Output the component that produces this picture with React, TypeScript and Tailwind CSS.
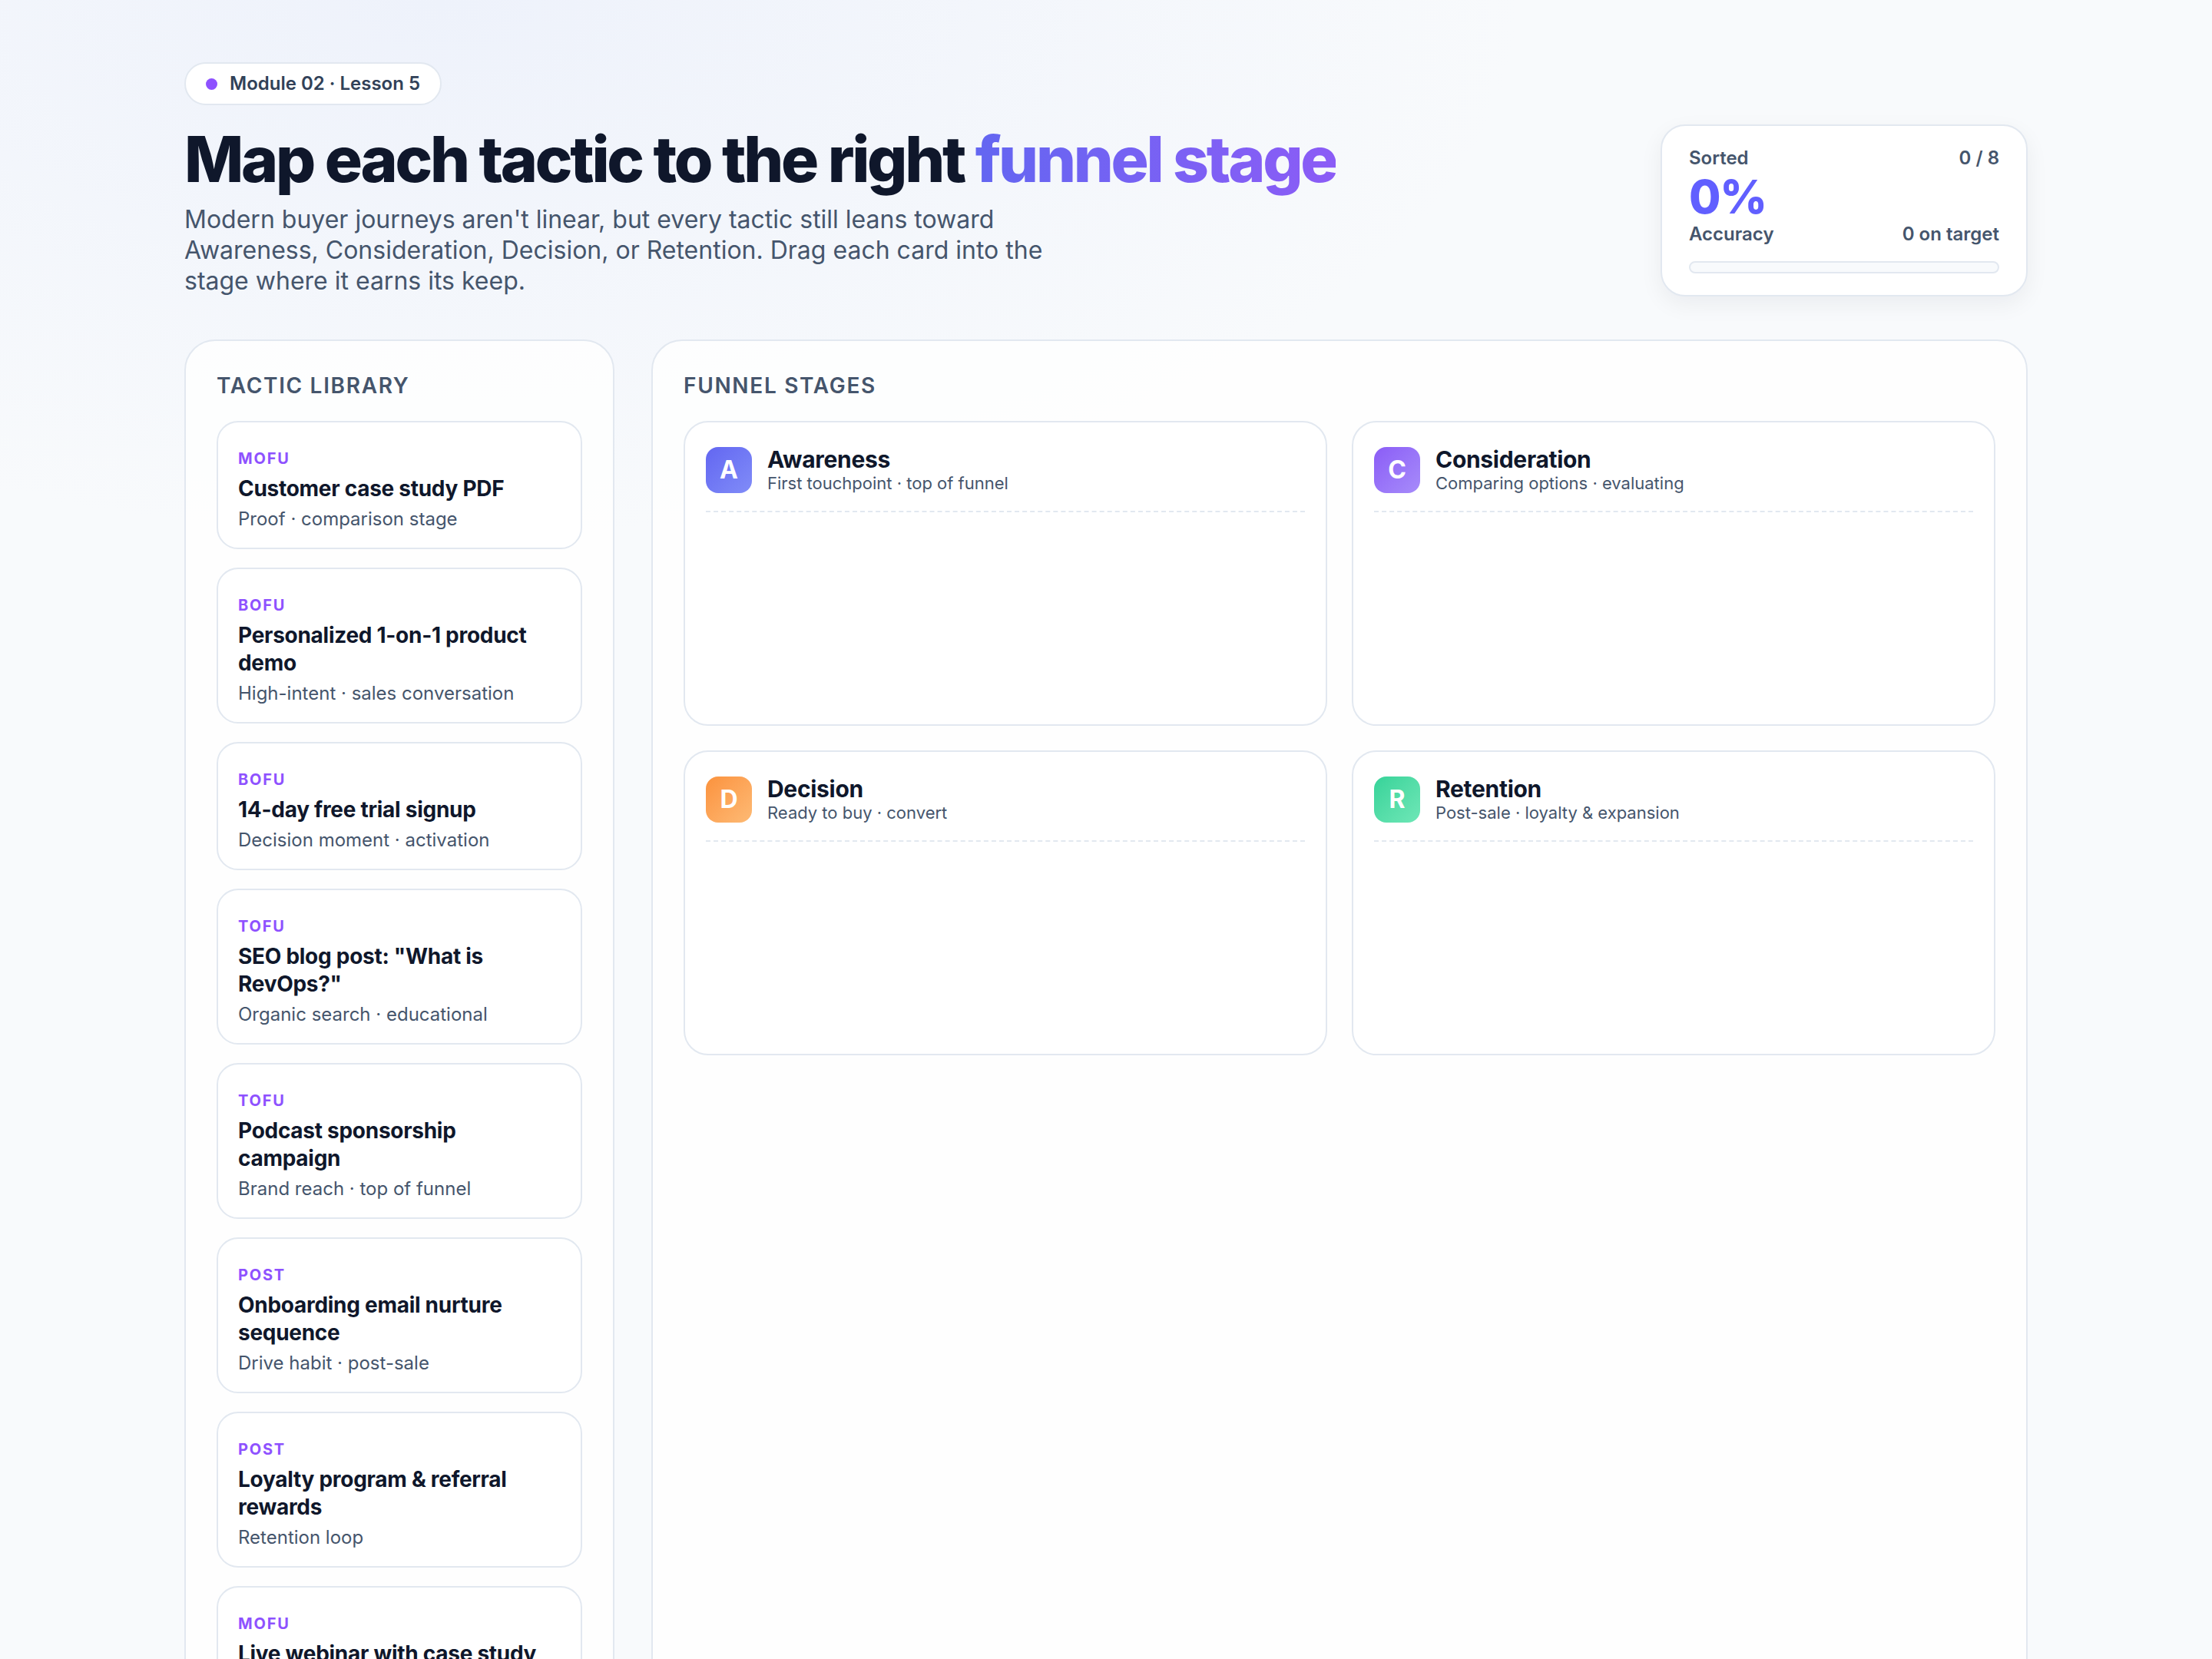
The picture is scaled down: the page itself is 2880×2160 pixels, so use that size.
import React from 'react'

type Tactic = { tag: string; title: string; note: string }
type Stage = { letter: string; name: string; hint: string; tile: string }

const tactics: Tactic[] = [
  { tag: 'MOFU', title: 'Customer case study PDF', note: 'Proof · comparison stage' },
  { tag: 'BOFU', title: 'Personalized 1-on-1 product demo', note: 'High-intent · sales conversation' },
  { tag: 'BOFU', title: '14-day free trial signup', note: 'Decision moment · activation' },
  { tag: 'TOFU', title: 'SEO blog post: "What is RevOps?"', note: 'Organic search · educational' },
  { tag: 'TOFU', title: 'Podcast sponsorship campaign', note: 'Brand reach · top of funnel' },
  { tag: 'POST', title: 'Onboarding email nurture sequence', note: 'Drive habit · post-sale' },
  { tag: 'POST', title: 'Loyalty program & referral rewards', note: 'Retention loop' },
  { tag: 'MOFU', title: 'Live webinar with case study', note: 'Evaluation · deep dive' },
]

const stages: Stage[] = [
  { letter: 'A', name: 'Awareness', hint: 'First touchpoint · top of funnel', tile: 'bg-gradient-to-br from-[#6366f1] to-[#818cf8]' },
  { letter: 'C', name: 'Consideration', hint: 'Comparing options · evaluating', tile: 'bg-gradient-to-br from-[#8b5cf6] to-[#a78bfa]' },
  { letter: 'D', name: 'Decision', hint: 'Ready to buy · convert', tile: 'bg-gradient-to-br from-[#fb923c] to-[#fdba74]' },
  { letter: 'R', name: 'Retention', hint: 'Post-sale · loyalty & expansion', tile: 'bg-gradient-to-br from-[#34d399] to-[#6ee7b7]' },
]

function StatsCard() {
  const sorted = 0
  const total = 8
  const accuracy = 0
  return (
    <div className="w-[478px] rounded-[32px] border-2 border-slate-200 bg-white px-[35px] pt-[26px] pb-[28px] shadow-[0_10px_30px_rgba(15,23,42,0.06)]">
      <div className="flex items-center justify-between text-[24px] leading-[32px] font-semibold text-slate-600">
        <span>Sorted</span>
        <span>{sorted} / {total}</span>
      </div>
      <div className="mt-[8px] text-[60px] leading-[52px] font-extrabold tracking-[-0.02em] text-indigo-500">
        {accuracy}%
      </div>
      <div className="mt-[11px] flex items-center justify-between text-[24px] leading-[24px] font-semibold text-slate-600">
        <span>Accuracy</span>
        <span>{sorted} on target</span>
      </div>
      <div className="mt-[23px] h-[16px] rounded-full border-2 border-slate-200 bg-slate-50">
        <div className="h-full rounded-full bg-indigo-500" style={{ width: `${(sorted / total) * 100}%` }} />
      </div>
    </div>
  )
}

function TacticCard({ t }: { t: Tactic }) {
  return (
    <div className="rounded-[28px] border-2 border-slate-200 bg-white px-[26px] pt-[33px] pb-[19px]">
      <div className="text-[20px] leading-[28px] font-bold tracking-[0.09em] text-violet-500">{t.tag}</div>
      <div className="mt-[7px] text-[28px] leading-[36px] font-bold tracking-[-0.01em] text-slate-900">{t.title}</div>
      <div className="mt-1 text-[24px] leading-[36px] text-slate-600">{t.note}</div>
    </div>
  )
}

function StageCard({ s }: { s: Stage }) {
  return (
    <div className="min-h-[397px] rounded-[32px] border-2 border-slate-200 bg-white px-[27px] pt-[31px]">
      <div className="flex items-center gap-5 border-b-2 border-dashed border-slate-200 pb-[22px]">
        <div className={`flex h-[60px] w-[60px] shrink-0 items-center justify-center rounded-[16px] text-[32px] font-bold text-white ${s.tile}`}>
          {s.letter}
        </div>
        <div>
          <div className="text-[30px] leading-[34px] font-bold tracking-[-0.01em] text-slate-900">{s.name}</div>
          <div className="text-[22px] leading-[28px] text-slate-600">{s.hint}</div>
        </div>
      </div>
    </div>
  )
}

export default function App() {
  return (
    <div className="min-h-screen bg-[#f8fafc] bg-[radial-gradient(ellipse_1400px_700px_at_20%_0%,#eef2fb_0%,#f8fafc_100%)] font-['Inter',sans-serif]">
      <div className="mx-auto w-[2400px] pt-[81px] pb-20">
        {/* Header */}
        <header className="flex items-end justify-between">
          <div>
            <div className="inline-flex items-center gap-4 rounded-full border-2 border-slate-200 bg-white px-[26px] py-[8px] text-[24px] leading-[36px] font-semibold text-slate-700">
              <span className="h-[15px] w-[15px] rounded-full bg-violet-500" />
              Module 02 · Lesson 5
            </div>
            <h1 className="mt-[27px] text-[82px] leading-[88px] font-extrabold tracking-[-0.04em] text-slate-900">
              Map each tactic to the right{' '}
              <span className="bg-gradient-to-r from-[#6366f1] to-[#8b5cf6] bg-clip-text text-transparent">funnel stage</span>
            </h1>
            <p className="mt-[14px] max-w-[1160px] text-[32px] leading-[40px] text-slate-600">
              Modern buyer journeys aren't linear, but every tactic still leans toward Awareness, Consideration,
              Decision, or Retention. Drag each card into the stage where it earns its keep.
            </p>
          </div>
          <StatsCard />
        </header>

        {/* Board */}
        <div className="mt-[56px] grid grid-cols-[560px_1fr] gap-12">
          <section className="rounded-[40px] border-2 border-slate-200 bg-white/80 p-10">
            <h2 className="text-[28px] leading-[36px] font-semibold uppercase tracking-[0.06em] text-slate-600">Tactic library</h2>
            <div className="mt-[28px] flex flex-col gap-6">
              {tactics.map((t, i) => (
                <TacticCard key={i} t={t} />
              ))}
            </div>
          </section>

          <section className="rounded-[40px] border-2 border-slate-200 bg-white/80 p-10">
            <h2 className="text-[28px] leading-[36px] font-semibold uppercase tracking-[0.06em] text-slate-600">Funnel stages</h2>
            <div className="mt-[28px] grid grid-cols-2 gap-8">
              {stages.map((s) => (
                <StageCard key={s.name} s={s} />
              ))}
            </div>
          </section>
        </div>
      </div>
    </div>
  )
}
